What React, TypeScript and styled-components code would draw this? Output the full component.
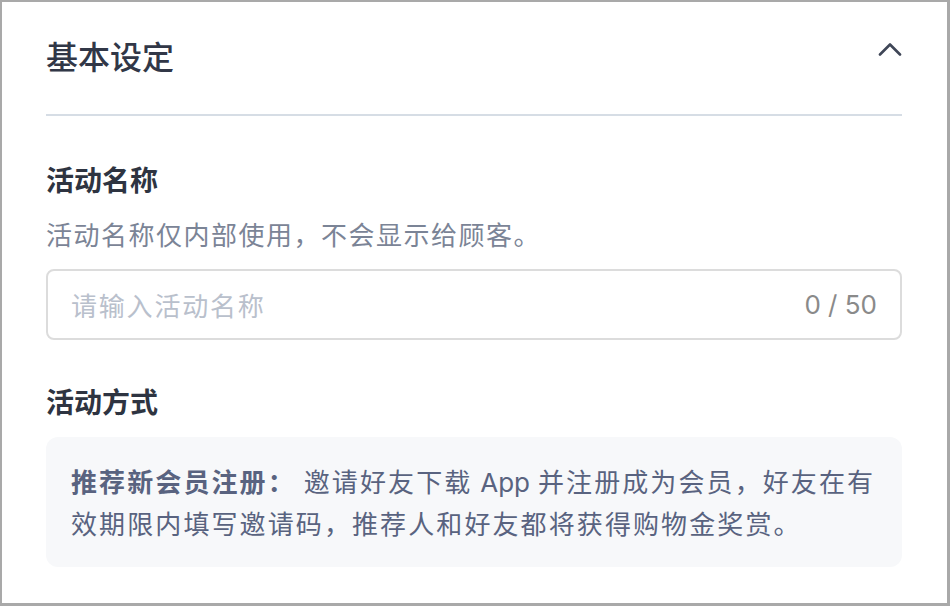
import React from "react";
import styled, { createGlobalStyle } from "styled-components";

const Global = createGlobalStyle`
  html, body { margin: 0; padding: 0; background: #ffffff; }
  * { box-sizing: border-box; }
  body { font-family: Inter, "Noto Sans CJK SC", sans-serif; }
`;

const Frame = styled.div`
  width: 950px;
  height: 606px;
  border-style: solid;
  border-color: #a9a9a9;
  border-width: 2px 3px 3px 2px;
  background: #ffffff;
  padding: 0 45px 0 44px;
  display: flex;
  flex-direction: column;
  overflow: hidden;
`;

const Header = styled.div`
  height: 114px;
  display: flex;
  align-items: center;
  justify-content: space-between;
  border-bottom: 2px solid #d6dde5;
  padding-bottom: 6px;
`;

const Title = styled.h2`
  margin: 0;
  font-family: "Noto Sans CJK SC", sans-serif;
  font-size: 32px;
  font-weight: 500;
  color: #313747;
  letter-spacing: 0;
`;

const Toggle = styled.button`
  border: none;
  background: none;
  padding: 0;
  margin-bottom: 12px;
  width: 24px;
  height: 16px;
  display: flex;
  align-items: center;
  justify-content: center;
  color: #3f4657;
  cursor: pointer;
`;

const Body = styled.div`
  display: flex;
  flex-direction: column;
`;

const Label = styled.div<{ $top: number }>`
  margin-top: ${(p) => p.$top}px;
  font-family: "Noto Sans CJK SC", sans-serif;
  font-size: 28px;
  line-height: 40px;
  font-weight: 600;
  color: #2e3441;
`;

const Hint = styled.p`
  margin: 17px 0 0;
  font-family: "Noto Sans CJK SC", sans-serif;
  font-size: 26px;
  line-height: 36px;
  letter-spacing: 1.5px;
  color: #7b8496;
`;

const InputBox = styled.div`
  margin-top: 17px;
  height: 71px;
  border: 2px solid #dcdcdc;
  border-radius: 8px;
  display: flex;
  align-items: center;
  padding: 0 23px;
  gap: 12px;
`;

const Input = styled.input`
  flex: 1;
  border: none;
  outline: none;
  background: transparent;
  font-family: "Noto Sans CJK SC", sans-serif;
  font-size: 26px;
  letter-spacing: 1.8px;
  color: #2e3441;
  padding: 0;
  &::placeholder { color: #b9c0cc; }
`;

const Counter = styled.span`
  font-family: Inter, "Liberation Sans", sans-serif;
  font-size: 26px;
  color: #8a8a8a;
`;

const InfoCard = styled.div`
  margin-top: 16px;
  background: #f7f8fa;
  border-radius: 12px;
  padding: 24px 25px 24px 25px;
  font-family: "Noto Sans CJK SC", sans-serif;
  font-size: 26px;
  line-height: 40px;
  letter-spacing: 2.1px;
  color: #596380;
`;

const Strong = styled.b`
  font-weight: 700;
`;

const AppWord = styled.span`
  font-family: Inter, "Liberation Sans", sans-serif;
  letter-spacing: 0;
`;

export default function App() {
  return (
    <>
      <Global />
      <Frame>
        <Header>
          <Title>基本设定</Title>
          <Toggle aria-label="收起">
            <svg width="24" height="14" viewBox="0 0 24 14" fill="none">
              <path d="M2 12.5 L12 2.5 L22 12.5" stroke="currentColor" strokeWidth="2.6" strokeLinecap="round" strokeLinejoin="round" />
            </svg>
          </Toggle>
        </Header>
        <Body>
          <Label $top={43}>活动名称</Label>
          <Hint>活动名称仅内部使用，不会显示给顾客。</Hint>
          <InputBox>
            <Input placeholder="请输入活动名称" />
            <Counter>0 / 50</Counter>
          </InputBox>
          <Label $top={41}>活动方式</Label>
          <InfoCard>
            <Strong>推荐新会员注册：</Strong> 邀请好友下载 <AppWord>App</AppWord> 并注册成为会员，好友在有效期限内填写邀请码，推荐人和好友都将获得购物金奖赏。
          </InfoCard>
        </Body>
      </Frame>
    </>
  );
}
